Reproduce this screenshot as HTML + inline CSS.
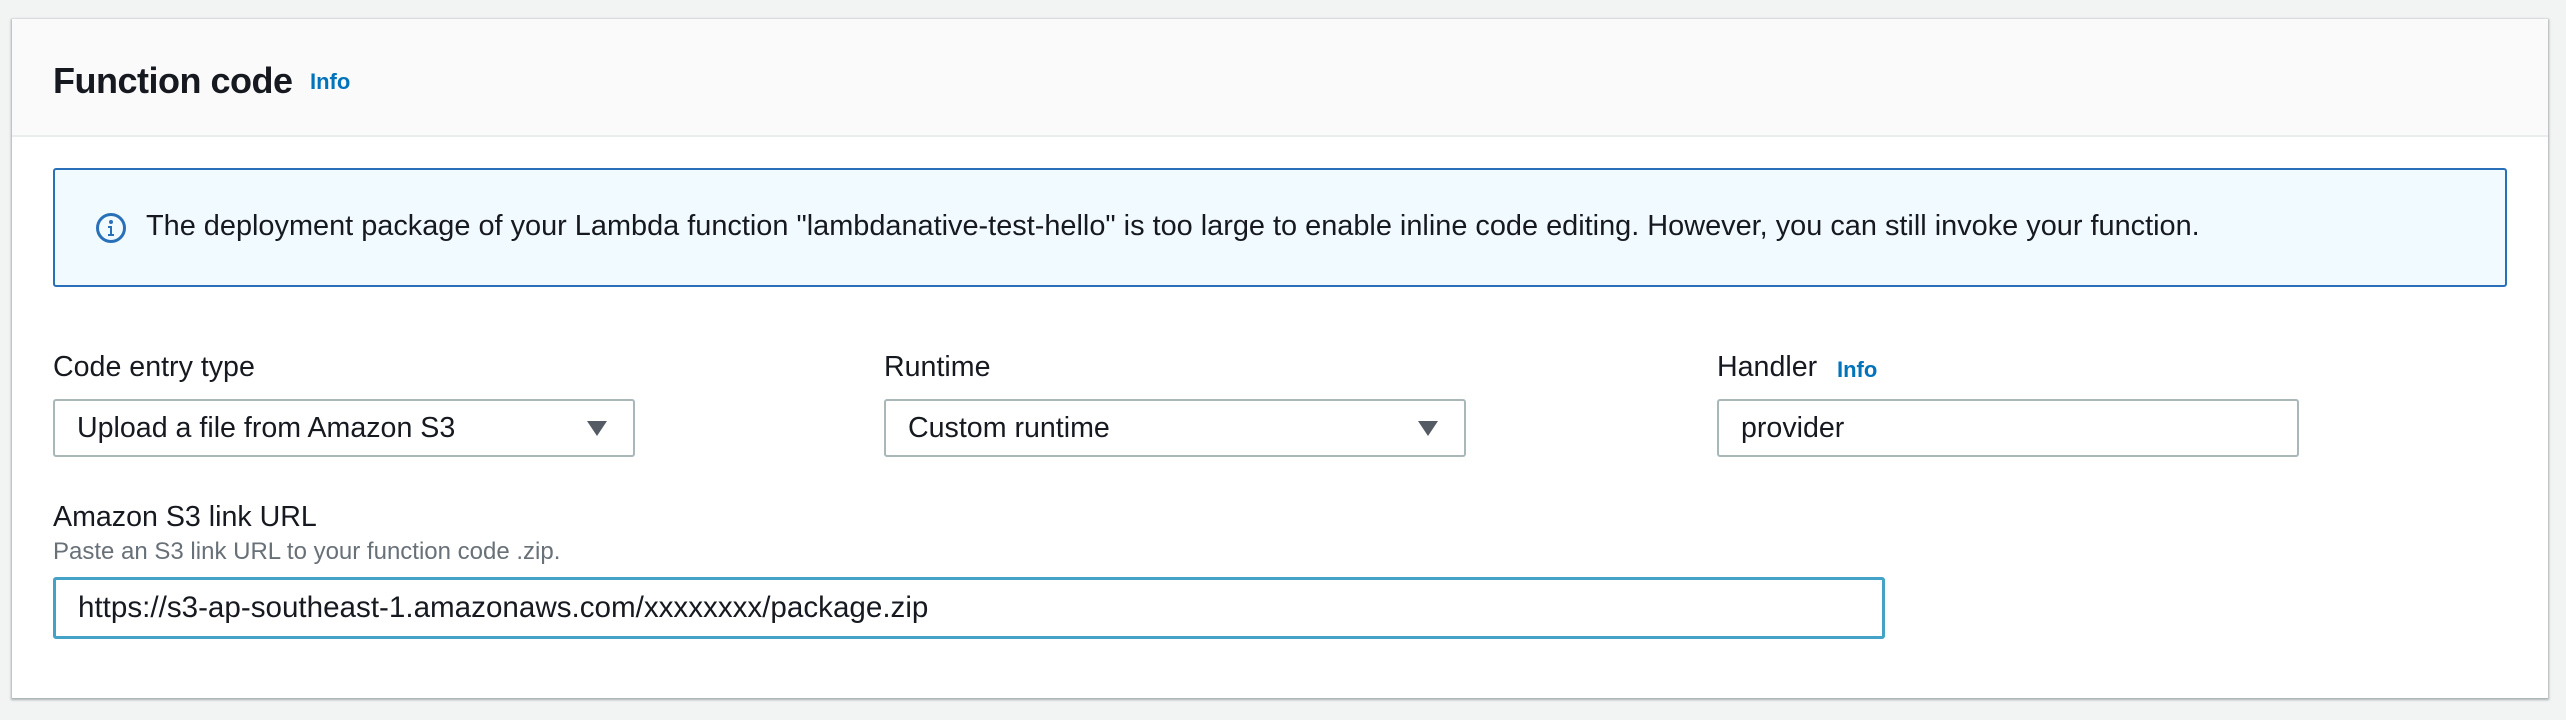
<!DOCTYPE html>
<html><head><meta charset="utf-8"><style>
*{box-sizing:border-box;margin:0;padding:0}
body{width:2566px;height:720px;background:#f2f3f3;font-family:"Liberation Sans",sans-serif;color:#16191f;position:relative;overflow:hidden}
.card{position:absolute;left:12px;top:19px;width:2536px;height:679px;background:#fff;box-shadow:0 1px 2px 1px rgba(0,28,36,.3);}
.hdr{position:absolute;left:0;top:0;width:100%;height:118px;background:#fafafa;border-bottom:2px solid #eaeded}
.a{position:absolute;white-space:nowrap}
.title{left:41px;top:41px;font-size:36px;font-weight:bold;letter-spacing:-0.5px}
.info{color:#0073bb;font-weight:bold;font-size:22px}
.alert{position:absolute;left:41px;top:149px;width:2454px;height:119px;background:#f1faff;border:2px solid #2a70b8;border-radius:3px}
.lbl{font-size:28.6px}
.box{position:absolute;height:58px;border:2px solid #aab7b8;border-radius:3px;background:#fff;font-size:28.6px;padding-left:22px;line-height:54px}
.arr{position:absolute;right:26px;top:20px;width:0;height:0;border-left:10px solid transparent;border-right:10px solid transparent;border-top:15px solid #545b64}
</style></head><body>
<div class="card">
 <div class="hdr"></div>
 <div class="a title">Function code</div>
 <div class="a info" style="left:298px;top:50px">Info</div>
 <div class="alert">
  <svg style="position:absolute;left:40px;top:42px" width="32" height="32" viewBox="0 0 32 32"><circle cx="16" cy="16" r="13.5" fill="none" stroke="#2a70b8" stroke-width="3"/><circle cx="16" cy="10" r="2" fill="#2a70b8"/><path d="M13 14h4v8h2v2h-6v-2h2v-6h-2z" fill="#2a70b8"/></svg>
  <div class="a" style="left:91px;top:40px;font-size:28.9px">The deployment package of your Lambda function "lambdanative-test-hello" is too large to enable inline code editing. However, you can still invoke your function.</div>
 </div>
 <div class="a lbl" style="left:41px;top:332px">Code entry type</div>
 <div class="box" style="left:41px;top:380px;width:582px">Upload a file from Amazon S3<div class="arr"></div></div>
 <div class="a lbl" style="left:872px;top:332px">Runtime</div>
 <div class="box" style="left:872px;top:380px;width:582px">Custom runtime<div class="arr"></div></div>
 <div class="a lbl" style="left:1705px;top:332px">Handler</div>
 <div class="a info" style="left:1825px;top:338px">Info</div>
 <div class="box" style="left:1705px;top:380px;width:582px">provider</div>
 <div class="a lbl" style="left:41px;top:482px">Amazon S3 link URL</div>
 <div class="a" style="left:41px;top:519px;font-size:24px;color:#687078">Paste an S3 link URL to your function code .zip.</div>
 <div class="box" style="left:41px;top:558px;width:1832px;height:62px;border:3px solid #44a2c8;line-height:56px;font-size:29.6px">https://s3-ap-southeast-1.amazonaws.com/xxxxxxxx/package.zip</div>
</div>
</body></html>
